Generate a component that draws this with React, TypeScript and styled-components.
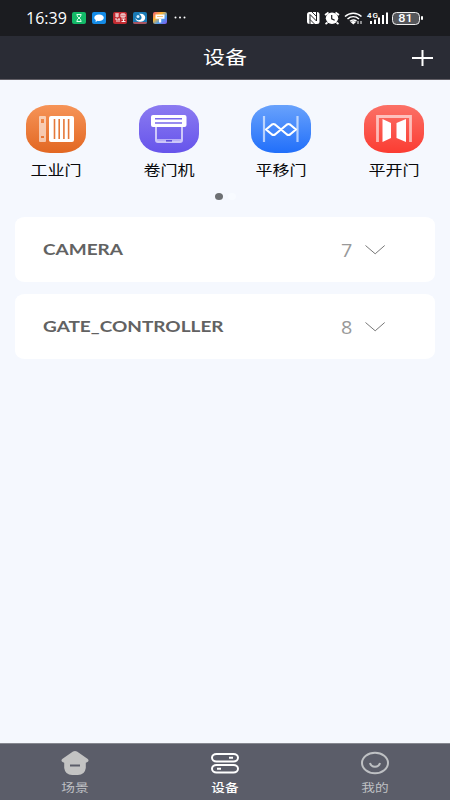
import React from "react";
import styled, { createGlobalStyle } from "styled-components";

const GlobalStyle = createGlobalStyle`
  * { box-sizing: border-box; }
  body { margin: 0; background: #f5f8fe; }
`;

const cjk = `"Roboto", "Noto Sans CJK SC", sans-serif`;

const Screen = styled.div`
  width: 450px;
  height: 800px;
  display: flex;
  flex-direction: column;
  overflow: hidden;
  background: #f5f8fe;
  font-family: ${cjk};
`;

const StatusBar = styled.div`
  flex: none;
  height: 36px;
  display: flex;
  align-items: center;
  justify-content: space-between;
  padding: 0 30px 0 26px;
  background: #1b1c20;
  color: #fff;
  svg { display: block; }
`;

const StatusGroup = styled.div<{ $gap: number }>`
  display: flex;
  align-items: center;
  gap: ${(p) => p.$gap}px;
`;

/* Wide lettering: the glyphs are set at a normal size, then widened. */
const Wide = styled.span<{ $x: number; $origin?: string }>`
  display: inline-block;
  white-space: nowrap;
  transform: scaleX(${(p) => p.$x});
  transform-origin: ${(p) => p.$origin ?? "center"};
`;

const Clock = styled.div`
  width: 46px;
  padding-bottom: 1px;
  font: 400 16px/20px "Open Sans", sans-serif;
`;

const Header = styled.header`
  flex: none;
  height: 44px;
  display: grid;
  grid-template-columns: 1fr auto 1fr;
  align-items: center;
  padding: 0 17px;
  border-bottom: 1px solid #625f66;
  background: #2a2c35;
  color: #fff;
  svg { grid-column: 3; justify-self: end; display: block; }
`;

const Title = styled.h1`
  grid-column: 2;
  margin: 0;
  font: 400 18px/26px ${cjk};
`;

const Categories = styled.nav`
  flex: none;
  height: 100px;
  padding-top: 25px;
  display: grid;
  grid-template-columns: repeat(4, 112.5px);
`;

const Category = styled.div`
  display: flex;
  flex-direction: column;
  align-items: center;
  gap: 5px;
  font-size: 14px;
  line-height: 24px;
  color: #08090b;
  svg { display: block; }
`;

const Pager = styled.div`
  flex: none;
  height: 37px;
  padding-top: 13px;
  display: flex;
  justify-content: center;
  gap: 5px;
`;

const Dot = styled.span<{ $active?: boolean }>`
  width: 8px;
  height: 7px;
  border-radius: 50%;
  background: ${(p) => (p.$active ? "#6d7073" : "#f8fbff")};
`;

const Groups = styled.main`
  flex: 1;
  display: flex;
  flex-direction: column;
  gap: 12px;
  padding: 0 15px;
`;

const Group = styled.section`
  height: 65px;
  padding: 0 49px 0 28px;
  display: flex;
  align-items: center;
  border-radius: 10px / 8px;
  background: #fff;
  svg { display: block; }
`;

const GroupName = styled.div`
  flex: 1;
  padding-bottom: 2px;
  font: 700 16px/24px "Lato", sans-serif;
  color: #626262;
`;

const Count = styled.div`
  width: 23px;
  font: 400 18px/24px "Open Sans", sans-serif;
  color: #999;
`;

const TabBar = styled.footer`
  flex: none;
  height: 57px;
  display: grid;
  grid-template-columns: repeat(3, 1fr);
  border-top: 1px solid #868890;
  background: #5b5d69;
`;

const Tab = styled.div<{ $active?: boolean }>`
  display: flex;
  flex-direction: column;
  align-items: center;
  padding-top: 6px;
  gap: 5px;
  font-size: 11px;
  line-height: 16px;
  font-weight: ${(p) => (p.$active ? 500 : 400)};
  color: ${(p) => (p.$active ? "#fff" : "#bfc0c4")};
  svg { display: block; }
`;

const AppBadges = () => (
  <svg width="116" height="14" viewBox="0 0 116 14">
    <defs>
      <linearGradient id="rainbow" x1="0" y1="0" x2="1" y2="1">
        <stop offset="0" stopColor="#ed5b7b" />
        <stop offset=".35" stopColor="#ffb52e" />
        <stop offset=".65" stopColor="#4b9df0" />
        <stop offset="1" stopColor="#8451e8" />
      </linearGradient>
    </defs>
    <rect x="0" y="1" width="14" height="12" rx="2" fill="#13b968" />
    <path d="M4.5 3.5h5M4.5 10.5h5M5 4c0 3 4 3 4 6M9 4c0 3-4 3-4 6" stroke="#d9ffea" fill="none" strokeWidth="1" />
    <rect x="20" y="1" width="14" height="12" rx="2" fill="#148be6" />
    <path d="M27 3.5c3 0 4.8 1.4 4.8 3.2S30 10 27 10c-.5 0-1 0-1.4-.2L23.500 11l.3-2c-1-.6-1.5-1.4-1.5-2.3 0-1.8 1.8-3.2 4.7-3.2z" fill="#fff" />
    <rect x="41" y="1" width="14" height="12" rx="2" fill="#c22b31" />
    <path d="M43 3h4M43 5h4M45 2.500v4M49 3h4v3h-4zM51 2.500v4M43 8h2v3M46 8h2M47 8v3M49.500 8h4M51.500 8v3M49.500 10.500h4" stroke="#fff" strokeWidth=".9" fill="none" />
    <rect x="61" y="1" width="14" height="12" rx="2" fill="#197ab5" />
    <path d="M67 2.8c4-.8 6.3 1.3 6.2 4-.1 2.5-2.3 4-5 4-2.7 0-4.7-1.5-4.9-4 1 1.8 2.5 2.6 4.2 2.300 2.500-.4 3.200-3.900-.5-6.300z" fill="#fff" />
    <circle cx="66" cy="5.500" r="1.500" fill="#d8f1ff" />
    <path d="M61 11h14a2 2 0 0 1-2 2H63a2 2 0 0 1-2-2z" fill="#a95460" />
    <rect x="81" y="1" width="14" height="12" rx="2" fill="url(#rainbow)" />
    <path d="M83.500 3.500h9v4.200h-9zM87 8h2.200v3.500H87z" fill="#fff" />
    <path d="M85 5.500h6" stroke="#f3b45b" strokeWidth=".8" />
    <g fill="#fff"><circle cx="103.500" cy="6.500" r="1" /><circle cx="108" cy="6.500" r="1" /><circle cx="112.500" cy="6.500" r="1" /></g>
  </svg>
);

const StatusIcons = () => (
  <svg width="82" height="16" viewBox="0 0 82 16">
    <rect x="0" y="2" width="12.500" height="12" rx="2.500" fill="#fff" />
    <path d="M3 14V4.500L9.500 11V2" fill="none" stroke="#1b1c20" strokeWidth="1" />
    <path d="M5 2l4.500 4.500M3 9.500L7.500 14" fill="none" stroke="#1b1c20" strokeWidth=".9" />
    <g fill="none" stroke="#fff">
      <path d="M18 5l3.500-2.500M28.500 2.500L32 5M20.500 12.500l-2 1.500M29.500 12.500l2 1.500" strokeWidth="1.700" />
      <path d="M38 6.500c4.800-4.500 11.800-4.500 16.500 0M40.500 9c3.400-3 8-3 11.500 0M43 11.300c2-1.700 4.500-1.700 6.500-.1" strokeWidth="1.500" />
      <path d="M51 11v3M54 11v3" strokeWidth="1" />
    </g>
    <ellipse cx="25" cy="8.300" rx="6.200" ry="5.700" fill="#fff" />
    <path d="M24.700 5v3.800l3 1.500" stroke="#1b1c20" strokeWidth="1.200" fill="none" />
    <path d="M43.500 12l2.800 2.500 2.700-2.500q-2.700-2-5.500 0z" fill="#fff" />
    <text x="60" y="7.800" fill="#fff" fontFamily="Roboto, sans-serif" fontWeight="600" fontSize="8" textLength="11">4G</text>
    <path d="M64 11v3M68 9.500V14M72 7.500V14M76 5v9M80 2.500V14" stroke="#fff" strokeWidth="2" />
  </svg>
);

const Battery = styled.div`
  position: relative;
  width: 28px;
  height: 13px;
  display: flex;
  align-items: center;
  justify-content: center;
  border: 1px solid #f0f0f0;
  border-radius: 4.5px;
  background: #55565a;
  font: 500 11.5px/11px Roboto, sans-serif;
  span { position: relative; top: 0.5px; }
  &::after {
    content: "";
    position: absolute;
    right: -4px;
    top: 3.5px;
    width: 2px;
    height: 4px;
    border-radius: 1px;
    background: #fff;
  }
`;

type IconKind = "industrial" | "shutter" | "sliding" | "swing";

const tints: Record<IconKind, [string, string]> = {
  industrial: ["#f69458", "#e26722"],
  shutter: ["#8b7bf1", "#6654eb"],
  sliding: ["#69a2fc", "#216ffa"],
  swing: ["#fb7167", "#fb3c32"],
};

const drawings: Record<IconKind, React.ReactNode> = {
  industrial: (
    <>
      <path fillRule="evenodd" d="M14 11h5q1 0 1 1v24q0 1-1 1h-5q-1 0-1-1V12q0-1 1-1zm1 3v4h3v-4zm0 17v2h3v-2z" fill="#fff" opacity=".6" />
      <rect x="23" y="11" width="25" height="26" rx="2" fill="#fff" />
      <path d="M28.500 14v20M33.200 14v20M37.900 14v20M42.600 14v20" stroke="#e5783a" strokeWidth="1.600" />
    </>
  ),
  shutter: (
    <>
      <path d="M17 21v14q0 2 2 2h22q2 0 2-2V21" fill="none" stroke="#fff" strokeWidth="2" opacity=".65" />
      <path d="M18 34h24v2H18z" fill="#fff" opacity=".5" />
      <path d="M27 35.800h6" stroke="#5d4ed9" strokeWidth="1.600" />
      <rect x="12" y="10" width="35.500" height="12" rx="2" fill="#fff" />
      <path d="M16 13.800h27M16 18h27" stroke="#7868ec" strokeWidth="1.600" />
    </>
  ),
  sliding: (
    <>
      <path d="M13 11v26M46.500 11v26" stroke="#fff" strokeWidth="2.200" opacity=".62" />
      <path d="M15 24.500l6-5q1.500-1 3 0l12 10q1.500 1 3 0l6-5-6-5q-1.500-1-3 0l-12 10q-1.500 1-3 0z" fill="none" stroke="#fff" strokeWidth="2.200" strokeLinejoin="round" />
    </>
  ),
  swing: (
    <>
      <path d="M13.500 37V11.500h33V37" fill="none" stroke="#fff" strokeWidth="2.800" opacity=".6" />
      <path d="M18.500 14l8.500 4v15l-8.500 4zM42 14l-9.500 4v15l9.500 4z" fill="#fff" />
    </>
  ),
};

const CategoryIcon = ({ kind }: { kind: IconKind }) => (
  <svg width="60" height="48" viewBox="0 0 60 48">
    <defs>
      <linearGradient id={kind} x1="0" y1="0" x2="0" y2="1">
        <stop offset="0" stopColor={tints[kind][0]} />
        <stop offset="1" stopColor={tints[kind][1]} />
      </linearGradient>
    </defs>
    <rect width="60" height="48" rx="24" ry="19" fill={`url(#${kind})`} />
    {drawings[kind]}
  </svg>
);

const Chevron = () => (
  <svg width="22" height="10" viewBox="0 0 22 10">
    <path d="M1.500 .5L11.200 8.800l9.500-8.300" fill="none" stroke="#777" strokeWidth="1" />
  </svg>
);

const HomeIcon = () => (
  <svg width="30" height="26" viewBox="0 0 30 26">
    <path d="M13 1.600q2-1 4 0l10.800 7.500q1.800 2-.8 3.200l-1.200.5v5.200q-1 7-8 7h-5.600q-7 0-8-7v-5.200l-1.200-.5q-2.600-1.200-.8-3.200z" fill="#c3c3c3" />
    <path d="M10 15.500h10" stroke="#5b5d69" strokeWidth="2" />
  </svg>
);

const DeviceIcon = () => (
  <svg width="30" height="26" viewBox="0 0 30 26">
    <g fill="none" stroke="#fff" strokeWidth="2">
      <rect x="2" y="4" width="26" height="7.500" rx="4.500" ry="3.750" />
      <rect x="2" y="15" width="26" height="7.500" rx="4.500" ry="3.750" />
      <path d="M19 7.800h4M7 18.800h4" />
    </g>
  </svg>
);

const SmileIcon = () => (
  <svg width="30" height="26" viewBox="0 0 30 26">
    <g fill="none" stroke="#bec0c3" strokeWidth="2">
      <ellipse cx="15" cy="13" rx="13" ry="10.200" />
      <path d="M10 13q1 3.700 5 3.700t5-3.700" />
    </g>
  </svg>
);

const categories: { kind: IconKind; label: string }[] = [
  { kind: "industrial", label: "工业门" },
  { kind: "shutter", label: "卷门机" },
  { kind: "sliding", label: "平移门" },
  { kind: "swing", label: "平开门" },
];

const groups = [
  { name: "CAMERA", count: 7 },
  { name: "GATE_CONTROLLER", count: 8 },
];

export default function App() {
  return (
    <Screen>
      <GlobalStyle />
      <StatusBar>
        <StatusGroup $gap={0}>
          <Clock><Wide $x={1} $origin="left">16:39</Wide></Clock>
          <AppBadges />
        </StatusGroup>
        <StatusGroup $gap={3}>
          <StatusIcons />
          <Battery><Wide $x={1.1}>81</Wide></Battery>
        </StatusGroup>
      </StatusBar>
      <Header>
        <Title><Wide $x={1.22}>设备</Wide></Title>
        <svg width="21" height="18" viewBox="0 0 21 18">
          <path d="M0 9h21M10.500 1v16" stroke="#fff" strokeWidth="2" />
        </svg>
      </Header>
      <Categories>
        {categories.map((c) => (
          <Category key={c.kind}>
            <CategoryIcon kind={c.kind} />
            <Wide $x={1.22}>{c.label}</Wide>
          </Category>
        ))}
      </Categories>
      <Pager><Dot $active /><Dot /></Pager>
      <Groups>
        {groups.map((g) => (
          <Group key={g.name}>
            <GroupName><Wide $x={1.187} $origin="left">{g.name}</Wide></GroupName>
            <Count><Wide $x={1.1} $origin="left">{g.count}</Wide></Count>
            <Chevron />
          </Group>
        ))}
      </Groups>
      <TabBar>
        <Tab><HomeIcon /><Wide $x={1.24}>场景</Wide></Tab>
        <Tab $active><DeviceIcon /><Wide $x={1.24}>设备</Wide></Tab>
        <Tab><SmileIcon /><Wide $x={1.24}>我的</Wide></Tab>
      </TabBar>
    </Screen>
  );
}
